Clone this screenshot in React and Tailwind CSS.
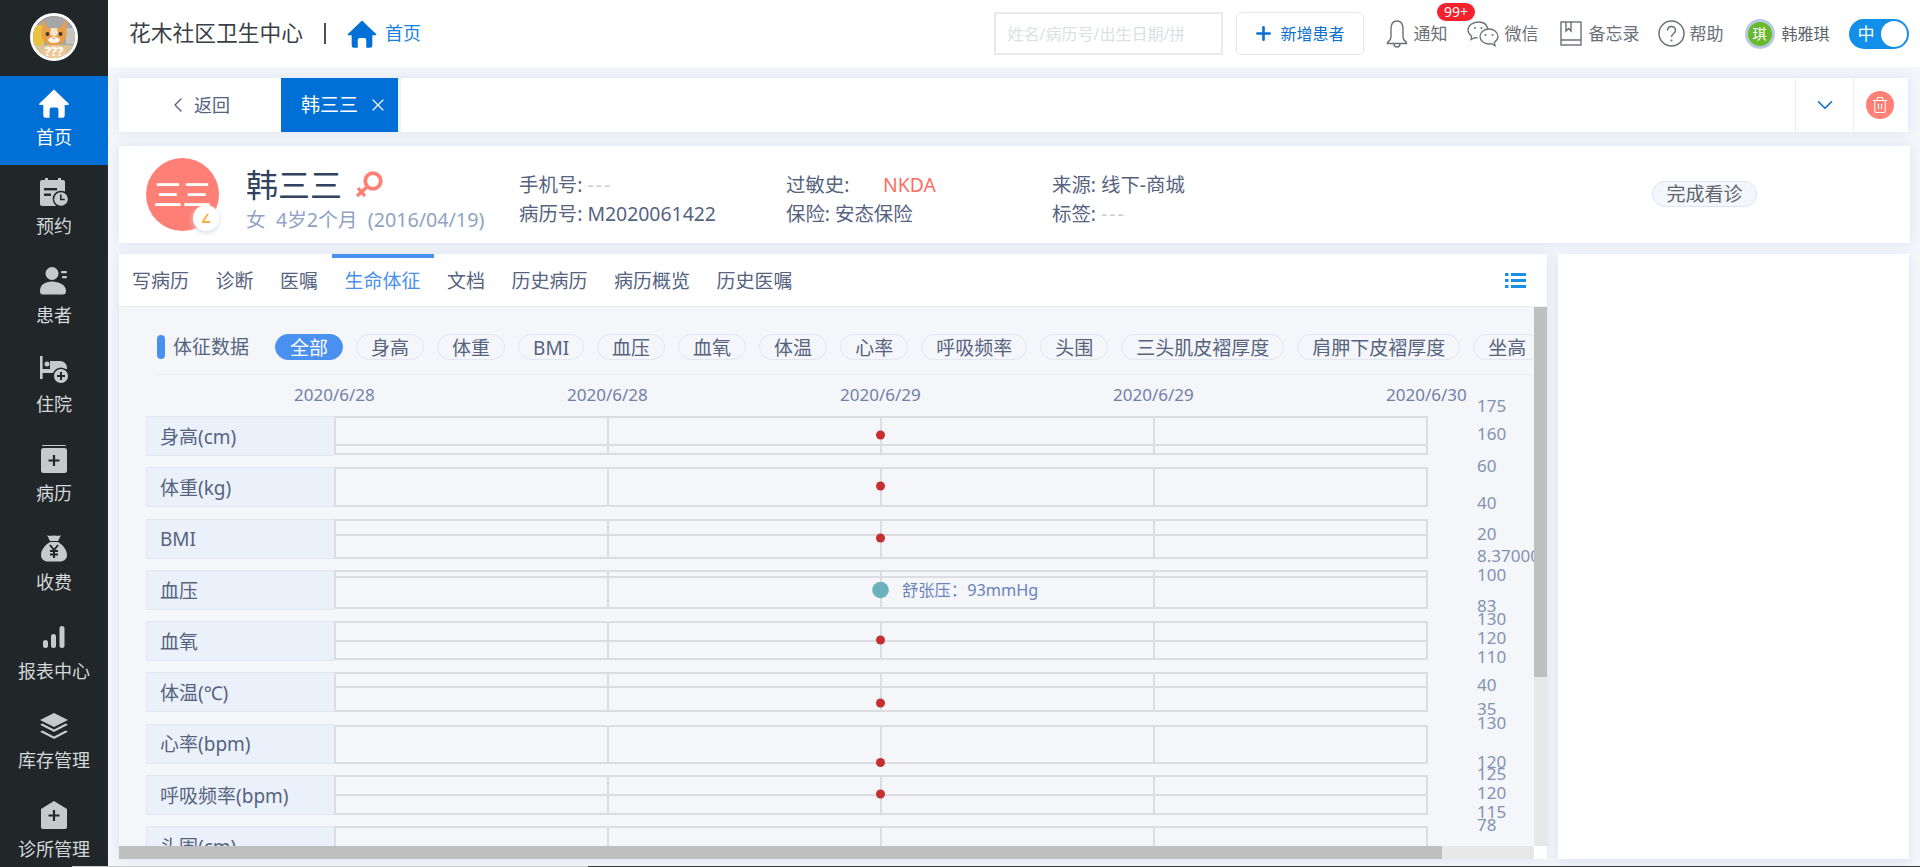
import { ChevronDown, ChevronLeft, X, Trash2, Plus } from "lucide-react";

const HomeIcon = ({ className }) => (
  <svg viewBox="0 0 30 29" className={className} fill="currentColor">
    <path d="M15 .5 29.6 14.6c.5.5.2 1.3-.5 1.3H25.7V26.5a2.3 2.3 0 0 1-2.3 2.3H19.4V20.6a2 2 0 0 0-2-2H12.6a2 2 0 0 0-2 2V28.8H6.6a2.3 2.3 0 0 1-2.3-2.3V15.9H.9c-.7 0-1-.8-.5-1.3Z" />
  </svg>
);

const CalendarIcon = () => (
  <svg viewBox="0 0 30 30" className="w-[30px] h-[30px]">
    <path d="M3 3h3V1h3v2h10V1h3v2h2a2 2 0 0 1 2 2v22a2 2 0 0 1-2 2H3a2 2 0 0 1-2-2V5a2 2 0 0 1 2-2Z" fill="#c5cacd" />
    <rect x="5" y="11" width="13" height="2.4" fill="#212629" />
    <rect x="5" y="16.500" width="7" height="2.4" fill="#212629" />
    <circle cx="22" cy="22" r="7.600" fill="#c5cacd" stroke="#212629" strokeWidth="1.500" />
    <path d="M21.800 17.500v5h4" fill="none" stroke="#212629" strokeWidth="1.600" />
  </svg>
);

const PatientIcon = () => (
  <svg viewBox="0 0 30 30" className="w-[30px] h-[30px]" fill="#c5cacd">
    <circle cx="13" cy="7.500" r="6.500" />
    <path d="M1 25c0-6 5-9.500 12-9.500s14 3.500 14 9.500c0 2.500-1 3.500-3 3.500H3.500C2 28.500 1 27.500 1 25Z" />
    <rect x="22" y="5" width="6" height="2.200" rx="1" />
    <rect x="23" y="10" width="5" height="2.200" rx="1" />
  </svg>
);

const BedIcon = () => (
  <svg viewBox="0 0 30 30" className="w-[30px] h-[30px]">
    <rect x="1" y="1" width="2.600" height="23" fill="#c5cacd" />
    <circle cx="8" cy="9" r="2.500" fill="#c5cacd" />
    <path d="M3 14h8V6h10c4 0 7 3 7 7v1H3Z" fill="#c5cacd" />
    <path d="M3 14h15v4H3Z" fill="#c5cacd" />
    <circle cx="22" cy="21" r="7.800" fill="#c5cacd" stroke="#212629" strokeWidth="1.500" />
    <path d="M22 17v8M18 21h8" stroke="#212629" strokeWidth="2" />
  </svg>
);

const RecordIcon = () => (
  <svg viewBox="0 0 28 28" className="w-[28px] h-[28px]">
    <path d="M3 0h22a1.500 1.500 0 0 1 1 1H2a1.500 1.500 0 0 1 1-1Z" fill="#c5cacd" />
    <rect x="1" y="3" width="26" height="25" rx="2.500" fill="#c5cacd" />
    <path d="M14 10v11M8.500 15.500h11" stroke="#212629" strokeWidth="2.200" />
  </svg>
);

const MoneyIcon = () => (
  <svg viewBox="0 0 28 28" className="w-[28px] h-[28px]">
    <path d="M7 1c2 1.500 4 .5 7 .5s5 1 7-.5l-3 6h-8Z M10 8h8c5 3 9 8 9 13 0 4-3 6.500-7 6.500H8c-4 0-7-2.500-7-6.500 0-5 4-10 9-13Z" fill="#c5cacd" />
    <path d="M10 11l4 5 4-5M14 16v8M10 17h8M10 20.500h8" stroke="#212629" strokeWidth="2" fill="none" />
  </svg>
);

const BarsIcon = () => (
  <svg viewBox="0 0 22 22" className="w-[22px] h-[22px]" fill="#c5cacd">
    <rect x="0" y="14" width="5" height="8" rx="2.500" />
    <rect x="8" y="8" width="5" height="14" rx="2.500" />
    <rect x="16.500" y="0" width="5" height="22" rx="2.500" />
  </svg>
);

const LayersIcon = () => (
  <svg viewBox="0 0 28 26" className="w-[28px] h-[26px]" fill="#c5cacd">
    <path d="M14 0 28 7 14 14 0 7Z" />
    <path d="M2.500 10.500 14 16.500l11.500-6 2.500 1.300L14 19 0 11.800Z" />
    <path d="M2.500 17.500 14 23.500l11.500-6 2.500 1.300L14 26 0 18.800Z" />
  </svg>
);

const ClinicIcon = () => (
  <svg viewBox="0 0 28 28" className="w-[28px] h-[28px]">
    <path d="M14 0 27 8v18a2 2 0 0 1-2 2H3a2 2 0 0 1-2-2V8Z" fill="#c5cacd" />
    <path d="M14 9v11M8.500 14.500h11" stroke="#212629" strokeWidth="2.200" />
  </svg>
);

const CatAvatar = () => (
  <div className="w-[48px] h-[48px] rounded-full border-[3px] border-white overflow-hidden bg-[#8e8f92]">
    <svg viewBox="0 0 42 42" className="w-full h-full">
      <rect width="42" height="42" fill="#a5a4a6" />
      <rect x="0" y="9" width="11" height="20" fill="#ecc23f" />
      <rect x="33" y="12" width="9" height="16" fill="#c9c6be" />
      <rect x="0" y="29" width="42" height="13" fill="#d8c492" />
      <path d="M9 3l6 9h12l6-9 .5 15c0 6-5.500 12-12.500 12S8.500 24 8.500 18Z" fill="#e6a04c" />
      <path d="M8 42c1-9 5-13 13-13s12 4 13 13Z" fill="#efc99a" />
      <path d="M18 12h6l1 6-4 3-4-3Z" fill="#f6e3c8" />
      <path d="M15 24c1-4 11-4 12 0-1 4-11 4-12 0Z" fill="#fbf4e8" />
      <circle cx="14.500" cy="18" r="2" fill="#4a3427" />
      <circle cx="27.500" cy="18" r="2" fill="#4a3427" />
      <path d="M19.800 22h2.400L21 23.500Z" fill="#d8667a" />
      <text x="21" y="40" textAnchor="middle" fontSize="13" fontWeight="700" fill="#fff">???</text>
    </svg>
  </div>
);

const navItems = [
  { label: "首页", icon: <HomeIcon className="w-[30px] h-[29px] text-white" />, active: true },
  { label: "预约", icon: <CalendarIcon /> },
  { label: "患者", icon: <PatientIcon /> },
  { label: "住院", icon: <BedIcon /> },
  { label: "病历", icon: <RecordIcon /> },
  { label: "收费", icon: <MoneyIcon /> },
  { label: "报表中心", icon: <BarsIcon /> },
  { label: "库存管理", icon: <LayersIcon /> },
  { label: "诊所管理", icon: <ClinicIcon /> },
];

const pills = ["全部", "身高", "体重", "BMI", "血压", "血氧", "体温", "心率", "呼吸频率", "头围", "三头肌皮褶厚度", "肩胛下皮褶厚度", "坐高"];

const tabs = ["写病历", "诊断", "医嘱", "生命体征", "文档", "历史病历", "病历概览", "历史医嘱"];

const dates = ["2020/6/28", "2020/6/28", "2020/6/29", "2020/6/29", "2020/6/30"];

const rows = [
  { label: "身高(cm)", top: 1, mid: 29, bottom: 38, dot: 19, ticks: [["175", -11], ["160", 17]] },
  { label: "体重(kg)", top: 1, bottom: 39, dot: 19, ticks: [["60", -2], ["40", 35]] },
  { label: "BMI", top: 1, mid: 16, bottom: 39, dot: 19, ticks: [["20", 14], ["8.37000", 36]] },
  { label: "血压", top: 1, mid: 7, bottom: 38, big: 20, ticks: [["100", 4.5], ["83", 35.5]] },
  { label: "血氧", top: 1, mid: 20, bottom: 38, dot: 19, ticks: [["130", -2.5], ["120", 16.5], ["110", 35.5]] },
  { label: "体温(℃)", top: 1, mid: 15, bottom: 39, dot: 31, ticks: [["40", 12.5], ["35", 36.5]] },
  { label: "心率(bpm)", top: 2, bottom: 39, dot: 38.5, ticks: [["130", -2], ["120", 37]] },
  { label: "呼吸频率(bpm)", top: 1, mid: 20, bottom: 39, dot: 19, ticks: [["125", -1.5], ["120", 17.5], ["115", 36.5]] },
  { label: "头围(cm)", top: 1, bottom: 39, ticks: [["78", -1.5]] },
];

const gridX = [1, 274, 547, 820, 1093];

function ChartRow({ row }) {
  return (
    <div className="flex h-[40px] shrink-0">
      <div className="w-[188px] shrink-0 bg-[#ebf1fa] border border-r-0 border-[#e0e7f2] rounded-l-[2px] pl-[13px] pt-[2px] flex items-center text-[19px] text-[#55637f]">
        {row.label}
      </div>
      {/* each row is its own little chart, the ticks hang out to the right of it */}
      <svg width="1200" height="40" className="shrink-0 overflow-visible">
        {gridX.map((x) => (
          <line key={x} x1={x} x2={x} y1={row.top} y2={row.bottom} stroke="#dcdde0" strokeWidth="2" />
        ))}
        {[row.top, row.mid, row.bottom].map((y, i) =>
          y !== undefined ? <line key={i} x1="0" x2="1094" y1={y} y2={y} stroke="#dcdde0" strokeWidth="2" /> : null
        )}
        {row.dot !== undefined && <circle cx="546.5" cy={row.dot} r="4.500" fill="#c62f2f" />}
        {row.big !== undefined && (
          <>
            <circle cx="546.5" cy={row.big} r="8.300" fill="#6bb2bd" />
            <text x="568" y={row.big} dominantBaseline="central" fontSize="16.3" fill="#6a84bb">舒张压：93mmHg</text>
          </>
        )}
        {row.ticks.map(([t, y]) => (
          <text key={t + y} x="1143" y={y} dominantBaseline="central" fontSize="17" fill="#8292b2">{t}</text>
        ))}
      </svg>
    </div>
  );
}

export default function App() {
  return (
    <div className="relative flex w-[1920px] h-[867px] overflow-hidden bg-[#f4f6fb] [font-family:'Noto_Sans','Noto_Sans_CJK_SC',sans-serif]">
      {/* sidebar */}
      <aside className="w-[108px] shrink-0 bg-[#212629] overflow-hidden">
        <div className="h-[76px] flex items-start justify-center pt-[13px]">
          <CatAvatar />
        </div>
        {navItems.map((item) => (
          <div key={item.label} className={`h-[89px] flex flex-col items-center ${item.active ? "bg-[#006fd6]" : ""}`}>
            <div className="h-[30px] mt-[12px] flex items-center justify-center">{item.icon}</div>
            <span className={`mt-[6px] text-[18px] leading-[26px] ${item.active ? "text-white" : "text-[#d3d8da]"}`}>{item.label}</span>
          </div>
        ))}
      </aside>

      <div className="flex-1 flex flex-col min-w-0">
        {/* header */}
        <header className="h-[67px] shrink-0 bg-white flex items-center relative">
          <span className="ml-[21px] text-[21.75px] text-[#3a3f47]">花木社区卫生中心</span>
          <span className="ml-[21px] w-[2px] h-[21px] bg-[#4a4f57]" />
          <HomeIcon className="ml-[21px] w-[30px] h-[28px] text-[#006fd6]" />
          <span className="ml-[8px] text-[18px] text-[#1a7fdc]">首页</span>

          <input
            placeholder="姓名/病历号/出生日期/拼音"
            className="ml-[572.5px] w-[229px] h-[43px] border-2 border-[#e8eaee] pl-[12px] pr-[37px] text-[16px] outline-none placeholder:text-[#dcdfe5]"
          />
          <button className="ml-[13px] w-[128px] h-[43px] border border-[#e3e6ec] rounded-[5px] flex items-center text-[#0b6fd3] text-[16px]">
            <Plus size={21} strokeWidth={3} className="ml-[16px]" />
            <span className="ml-[7px]">新增患者</span>
          </button>

          <svg viewBox="0 0 22 28" className="ml-[22px] w-[22px] h-[28px]" fill="none" stroke="#6b7078" strokeWidth="1.400">
            <path d="M11 1c-4.500 0-6 4-6 8v8c0 3-2 4-3.500 5.500v1h19v-1C19 21 17 20 17 17V9c0-4-1.500-8-6-8ZM8 24c0 4 6 4 6 0" />
          </svg>
          <span className="ml-[6px] text-[17px] text-[#6b7078]">通知</span>
          <svg viewBox="0 0 32 26" className="ml-[19px] w-[32px] h-[26px]" fill="none" stroke="#6b7078" strokeWidth="1.300">
            <path d="M12 1C6 1 1 4.500 1 9c0 2.800 1.700 4.800 3.600 6.300L4 18.500l3.600-1.900c1 .3 2 .4 3 .4" />
            <path d="M22 8c-5 0-9 3.200-9 7.500s4 7.500 9 7.500c1 0 2-.2 2.800-.4l3.200 2-.7-3.200c2-1.500 3.700-3.500 3.700-5.900C31 11.200 27 8 22 8Z" />
            <path d="M21 8C20 4 17 1 12 1" />
            <circle cx="8" cy="7" r="1" fill="#6b7078" stroke="none" />
            <circle cx="14.500" cy="7" r="1" fill="#6b7078" stroke="none" />
            <circle cx="18.500" cy="14" r="1" fill="#6b7078" stroke="none" />
            <circle cx="25.500" cy="14" r="1" fill="#6b7078" stroke="none" />
          </svg>
          <span className="ml-[6px] text-[17px] text-[#6b7078]">微信</span>
          <svg viewBox="0 0 22 25" className="ml-[21px] w-[22px] h-[25px]" fill="none" stroke="#6b7078" strokeWidth="1.400">
            <rect x="1" y="1" width="20" height="23" />
            <path d="M1 19h20M6 1v9l2.500-2.500L11 10V1" />
          </svg>
          <span className="ml-[7px] text-[17px] text-[#6b7078]">备忘录</span>
          <svg viewBox="0 0 27 27" className="ml-[18px] w-[27px] h-[27px]" fill="none" stroke="#6b7078" strokeWidth="1.500">
            <circle cx="13.500" cy="13.500" r="12.500" />
            <path d="M9.500 10.500c0-5.500 8-5.500 8 0 0 3-4 3-4 6.500" />
            <circle cx="13.500" cy="20.500" r="1" fill="#6b7078" stroke="none" />
          </svg>
          <span className="ml-[5px] text-[17px] text-[#6b7078]">帮助</span>
          <div className="ml-[21px] w-[30px] h-[30px] rounded-full bg-[#69b92f] border-[3px] border-[#b9c8e2] flex items-center justify-center text-white text-[14px]">琪</div>
          <span className="ml-[7px] text-[16px] text-[#5f646c]">韩雅琪</span>
          <div className="ml-[19px] w-[60px] h-[30px] rounded-full bg-[#128fe9] flex items-center justify-between pl-[9px] pr-[2px]">
            <span className="text-white text-[17px]">中</span>
            <span className="w-[26px] h-[26px] rounded-full bg-white" />
          </div>

          <span className="absolute left-[1329px] top-[3px] w-[38px] h-[18px] rounded-[9px] bg-[#f5222d] text-white text-[14px] leading-[18px] text-center">99+</span>
        </header>

        <main className="flex-1 flex flex-col pt-[11px] pl-[11px] pr-[10px] min-h-0">
          {/* open tabs */}
          <div className="h-[54px] shrink-0 mr-[2px] bg-white flex items-stretch shadow-[0_0_12px_#dde2ee]">
            <div className="w-[162px] flex items-center text-[#55637f] text-[18px]">
              <ChevronLeft size={24} strokeWidth={1.4} className="ml-[47px]" />
              <span className="ml-[4px]">返回</span>
            </div>
            <div className="w-[117px] bg-[#006fd6] text-white flex items-center pl-[20px] text-[19px]">
              韩三三
              <X size={20} strokeWidth={1.4} className="ml-[10px]" />
            </div>
            <div className="w-[3px] bg-[#eef1f7]" />
            <div className="flex-1" />
            <div className="w-[58px] border-l border-[#e9edf4] flex items-center justify-center text-[#0b6fd3]">
              <ChevronDown size={26} strokeWidth={1.5} />
            </div>
            <div className="w-[55px] border-l border-[#e9edf4] flex items-center pl-[12px]">
              <div className="w-[28px] h-[28px] rounded-full bg-[#ff8077] flex items-center justify-center text-white">
                <Trash2 size={18} strokeWidth={1.4} />
              </div>
            </div>
          </div>

          {/* patient card */}
          <div className="h-[97px] shrink-0 mt-[14px] bg-white flex shadow-[0_0_12px_#dde2ee] text-[#55637f] text-[19.4px]">
            <div className="relative ml-[27px] mt-[12px] w-[73px] h-[73px] rounded-full bg-[#fe7f76] flex items-center justify-center text-white text-[29px] font-medium">
              三三
              <span className="absolute right-0 bottom-0 w-[26px] h-[26px] rounded-full bg-white shadow-[0_2px_5px_#d5dbe8] flex items-center justify-center">
                <svg viewBox="0 0 12 12" className="w-[12px] h-[12px]" fill="none" stroke="#f9ae3a" strokeWidth="1.800">
                  <path d="M8 2 3 9M2 10h8" />
                </svg>
              </span>
            </div>
            <div className="ml-[27px] w-[273px] shrink-0">
              <div className="flex items-center h-[39px] mt-[19px] -mb-[1px]">
                <span className="text-[32px] text-[#33435f] leading-[39px]">韩三三</span>
                <svg viewBox="0 0 28 27" className="ml-[13px] w-[28px] h-[27px]" fill="none" stroke="#fe7f76">
                  <circle cx="18" cy="10" r="7.800" strokeWidth="3.800" />
                  <path d="M12 16 2 25M3 17l7 8" strokeWidth="3.400" />
                </svg>
              </div>
              <div className="text-[19.7px] text-[#8fa3c4] leading-[30px] mt-[2px] whitespace-pre">女  4岁2个月  (2016/04/19)</div>
            </div>
            <div className="w-[267px] shrink-0 pt-[24px] leading-[29px]">
              <div>手机号: <span className="text-[#c8cdd6] tracking-[2px]">---</span></div>
              <div>病历号: M2020061422</div>
            </div>
            <div className="w-[266px] shrink-0 pt-[24px] leading-[29px]">
              <div className="flex"><span className="w-[97px]">过敏史:</span><span className="text-[#fb6f66]">NKDA</span></div>
              <div>保险: 安态保险</div>
            </div>
            <div className="w-[600px] shrink-0 pt-[24px] leading-[29px]">
              <div>来源: 线下-商城</div>
              <div>标签: <span className="text-[#c8cdd6] tracking-[2px]">---</span></div>
            </div>
            <div className="mt-[35px] w-[105px] h-[26px] rounded-full bg-[#f3f6fa] border border-[#dee4ee] text-[#5f646c] text-[19px] leading-[25px] text-center">完成看诊</div>
          </div>

          <div className="flex-1 flex gap-[11px] mt-[11px] mb-[8px] mr-[1px] min-h-0">
            {/* left panel */}
            <section className="w-[1428px] shrink-0 flex flex-col bg-white shadow-[0_0_12px_#dde2ee] min-h-0">
              <nav className="h-[53px] shrink-0 flex border-b border-[#edf0f5] relative pl-[13px] pt-[2px] text-[19px] text-[#55637f] gap-[26.5px]">
                {tabs.map((t) => (
                  <div key={t} className={`relative flex items-center ${t === "生命体征" ? "text-[#4a90f0]" : ""}`}>
                    {t}
                    {t === "生命体征" && <span className="absolute left-[-13px] right-[-13px] top-[-2px] h-[4px] bg-[#4a90f0]" />}
                  </div>
                ))}
                <svg viewBox="0 0 21 15" className="absolute right-[21px] top-[19px] w-[21px] h-[15px]" fill="#1a8fe8">
                  <rect x="0" y="0" width="3.500" height="3" />
                  <rect x="6" y="0" width="15" height="3" />
                  <rect x="0" y="6" width="3.500" height="3" />
                  <rect x="6" y="6" width="15" height="3" />
                  <rect x="0" y="12" width="3.500" height="3" />
                  <rect x="6" y="12" width="15" height="3" />
                </svg>
              </nav>

              <div className="flex-1 flex min-h-0">
                <div className="flex-1 bg-[#f4f6f9] overflow-hidden min-w-0 pt-[27px]">
                  <div className="flex items-center h-[26px] pl-[38px] text-[19px] text-[#55637f]">
                    <span className="w-[8px] h-[24px] rounded-[4px] bg-[#4a90f0] shrink-0" />
                    <span className="ml-[8px] w-[102px] shrink-0">体征数据</span>
                    <div className="flex gap-[13px]">
                      {pills.map((p, i) => (
                        <span
                          key={p}
                          className={`h-[26px] px-[14px] rounded-full border shrink-0 leading-[27px] whitespace-nowrap ${i === 0 ? "bg-[#4a90f0] border-[#4a90f0] text-white" : "border-[#e1e6f0] text-[#55637f]"}`}
                        >
                          {p}
                        </span>
                      ))}
                    </div>
                  </div>
                  <div className="ml-[38px] mt-[14px] h-px bg-[#eaedf2]" />
                  <div className="ml-[175px] w-[1172px] h-[41px] pb-[2px] flex justify-between items-center text-[17px] text-[#7080a8]">
                    {dates.map((d, i) => (
                      <span key={i} className="w-[80px] text-center">{d}</span>
                    ))}
                  </div>
                  <div className="ml-[27px] flex flex-col gap-[11.25px]">
                    {rows.map((row) => (
                      <ChartRow key={row.label} row={row} />
                    ))}
                  </div>
                </div>
                {/* scrollbar */}
                <div className="w-[13px] shrink-0 bg-[#e8e8e8]">
                  <div className="h-[370px] bg-[#bfbfbf]" />
                </div>
              </div>
              <div className="h-[13px] shrink-0 flex">
                <div className="w-[1323px] bg-[#bfbfbf]" />
                <div className="w-[92px] bg-[#e8e8e8]" />
                <div className="flex-1 bg-white" />
              </div>
            </section>

            {/* right panel */}
            <section className="flex-1 bg-white shadow-[0_4px_12px_#dde2ee]" />
          </div>
        </main>
      </div>

      {/* window edge at the very bottom of the capture */}
      <div className="absolute left-[72px] bottom-0 w-[516px] h-px bg-[#c9c9c9]" />
      <div className="absolute left-[588px] right-0 bottom-0 h-px bg-[#3a3a3a]" />
    </div>
  );
}
